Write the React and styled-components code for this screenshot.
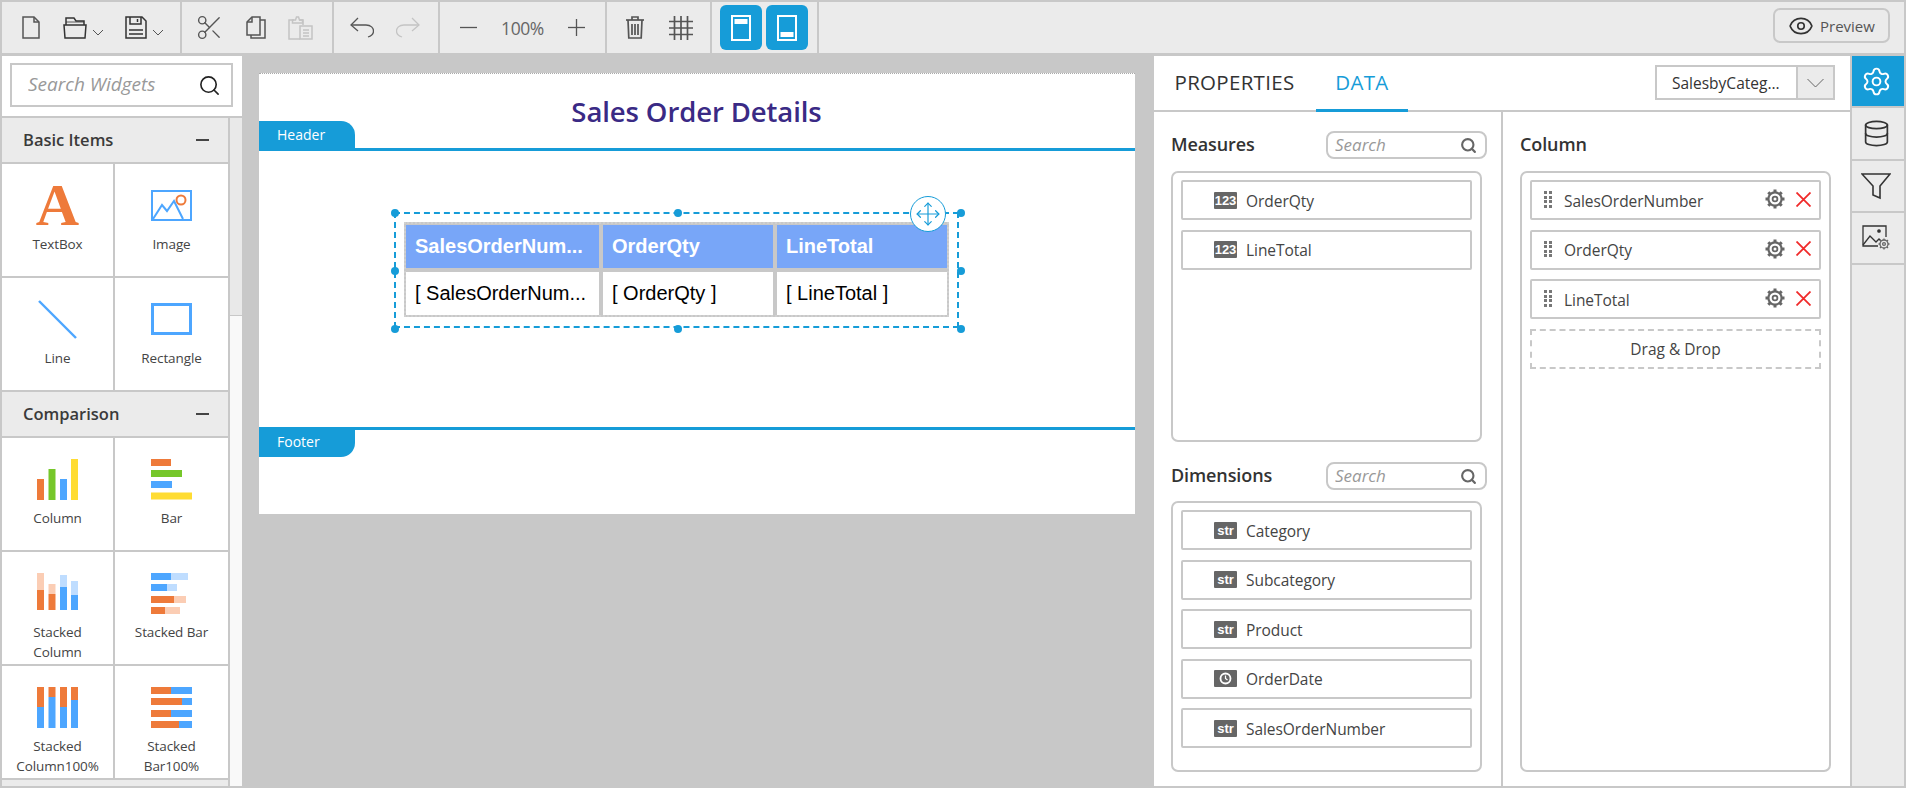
import React from 'react';
import styled, { createGlobalStyle } from 'styled-components';
import { Search, Settings, Database, Eye, Scissors, Move } from 'lucide-react';

const SANS = '"Open Sans", "Noto Sans", sans-serif';
const GRAY = '#c8c8c8';
const PANEL = '#ebebeb';
const BLUE = '#169cd8';
const TEXT = '#333';

const Global = createGlobalStyle`
  html, body { margin: 0; padding: 0; background: ${GRAY}; }
  * { box-sizing: border-box; }
  #root { width: 1906px; height: 788px; overflow: hidden; }
`;

const Root = styled.div`
  width: 1906px; height: 788px; padding: 2px; background: ${GRAY};
  display: flex; flex-direction: column; font-family: ${SANS}; color: ${TEXT};
`;
const Toolbar = styled.div`
  height: 51px; flex: none; display: flex; background: ${PANEL};
`;
const ToolGroup = styled.div`
  width: ${p => p.$w}px; flex: none; height: 100%;
  display: flex; align-items: center;
  padding-left: ${p => p.$pl}px; gap: ${p => p.$gap}px;
  border-right: 2px solid ${GRAY};
`;
const ToolEnd = styled.div`
  flex: 1; display: flex; align-items: flex-start; justify-content: flex-end;
  padding: 6px 14px 0 0;
`;
const Tool = styled.span`
  display: flex; align-items: center; flex: none;
  color: ${p => (p.$off ? '#c4c4c4' : '#555')};
`;
const ZoomText = styled.span`
  width: 91px; text-align: center; font-size: 17.5px; color: #666; letter-spacing: -0.4px;
`;
const ViewButton = styled.div`
  width: 42px; height: 45px; border-radius: 6px; background: ${BLUE};
  display: flex; align-items: center; justify-content: center;
`;
const PreviewButton = styled.div`
  width: 117px; height: 35px; border: 2px solid ${GRAY}; border-radius: 7px;
  display: flex; align-items: center; gap: 6px; padding-left: 13px;
  font-size: 15px; color: #555;
`;
const Body = styled.div`
  flex: 1; min-height: 0; margin-top: 3px; display: flex;
`;
const LeftPanel = styled.aside`
  width: 240px; flex: none; display: flex; flex-direction: column; background: #fff;
`;
const SearchArea = styled.div`
  flex: none; height: 62px; padding: 7px 9px 9px 8px; border-bottom: 2px solid ${GRAY};
`;
const WidgetSearch = styled.div`
  height: 44px; border: 2px solid ${GRAY}; display: flex; align-items: center; padding: 0 10px 0 16px;
`;
const PlainInput = styled.input`
  flex: 1; min-width: 0; border: 0; outline: 0; background: transparent; padding: 0 0 ${p => p.$lift}px;
  font-family: ${SANS}; font-style: italic; font-size: ${p => p.$size}px; color: #999;
  &::placeholder { color: #999; opacity: 1; }
`;
const ListRow = styled.div`
  flex: 1; min-height: 0; display: flex;
`;
const WidgetList = styled.div`
  width: 228px; flex: none; background: ${GRAY}; border-right: 2px solid ${GRAY};
  display: flex; flex-direction: column; overflow: hidden;
`;
const ScrollTrack = styled.div`
  flex: 1; background: #f9f9f9; display: flex; flex-direction: column;
`;
const ScrollThumb = styled.div`
  height: 198px; background: #e9e9e9; border-bottom: 1px solid ${GRAY};
`;
const CategoryHeader = styled.div`
  height: 44px; flex: none; background: ${PANEL}; display: flex; align-items: center; justify-content: space-between;
  padding: 0 19px 2px 21px; font-size: 16.5px; font-weight: 600; color: #3a3a3a;
`;
const CategoryMark = styled.span`
  width: 13px; height: 2px; background: #444; margin-top: 2px;
`;
const WidgetGrid = styled.div`
  display: grid; grid-template-columns: 111px 113px; grid-auto-rows: 112px; gap: 2px;
  padding: 2px 0; flex: none;
`;
const WidgetCell = styled.div`
  background: #fff; padding-top: 21px; display: flex; flex-direction: column; align-items: center;
`;
const WidgetIcon = styled.div`
  width: 41px; height: 41px; display: flex; align-items: center; justify-content: center;
`;
const LetterIcon = styled.span`
  font-family: "Liberation Serif", serif; font-weight: 700; font-size: 60px; line-height: 41px;
  color: #ee7a3a; height: 41px;
`;
const WidgetLabel = styled.div`
  margin-top: 8px; font-size: 13.5px; line-height: 20px; text-align: center; color: #444; letter-spacing: -0.1px;
`;
const Canvas = styled.main`
  width: 912px; flex: none; padding: 17px 0 0 17px;
`;
const ReportPage = styled.div`
  width: 876px; height: 441px; background: #fff; display: flex; flex-direction: column;
  border-top: 1px dotted #aaa;
`;
const HeaderBand = styled.div`
  height: 77px; flex: none; display: grid; border-bottom: 3px solid ${BLUE};
`;
const ReportTitle = styled.h1`
  grid-area: 1 / 1; justify-self: center; align-self: start; margin: 20px 1px 0 0;
  font-size: 27.5px; line-height: 36px; font-weight: 600; color: #3a2a85; letter-spacing: -0.1px;
`;
const BandTab = styled.div`
  grid-area: 1 / 1; align-self: end; justify-self: start;
  width: 96px; height: 27px; background: ${BLUE}; color: #fff; font-size: 14px;
  display: flex; align-items: center; padding: 0 0 ${p => (p.$bottom ? '5px' : '1px')} 18px;
  border-radius: ${p => (p.$bottom ? '0 0 14px 0' : '0 14px 0 0')};
`;
const BodyBand = styled.div`
  height: 276px; flex: none; padding: 61px 0 0 135px;
`;
const SelectionFrame = styled.div`
  position: relative; width: 565px; height: 116px; border: 2px dashed ${BLUE}; padding: 8px;
`;
const Handle = styled.span`
  position: absolute; left: ${p => p.$x}px; top: ${p => p.$y}px; width: 8px; height: 8px;
  margin: -4px 0 0 -4px; border-radius: 50%; background: ${BLUE};
`;
const MoveBadge = styled.div`
  position: absolute; left: 514px; top: -18px; width: 36px; height: 36px; border-radius: 50%; z-index: 2;
  background: #fff; border: 1.5px solid ${BLUE}; display: flex; align-items: center; justify-content: center; color: ${BLUE};
`;
const TableGrid = styled.div`
  width: 545px; height: 95px; border: 2px dotted #d0d0d0; background: ${GRAY}; padding-top: 1px;
  display: grid; grid-template-columns: 193px 170px 170px; grid-template-rows: 43px 43px; gap: 4px;
  font-family: "Liberation Sans", sans-serif; font-size: 20px;
`;
const HeadCell = styled.div`
  background: #78a6f8; color: #fff; font-weight: 700; display: flex; align-items: center; padding-left: 9px; overflow: hidden; white-space: nowrap;
`;
const DataCell = styled.div`
  background: #fff; color: #000; display: flex; align-items: center; padding-left: 9px; overflow: hidden; white-space: nowrap;
`;
const FooterBand = styled.div`
  flex: 1; border-top: 3px solid ${BLUE};
`;
const RightPanel = styled.section`
  width: 696px; flex: none; background: #fff; display: flex; flex-direction: column;
`;
const TabRow = styled.div`
  height: 56px; flex: none; border-bottom: 2px solid ${GRAY}; display: flex; align-items: stretch; padding: 0 15px 0 19px;
`;
const TabLabel = styled.div`
  display: flex; align-items: center; justify-content: center; font-size: 20.5px; font-weight: 500; height: 56px;
  width: ${p => p.$w}px; margin-left: ${p => p.$ml}px; color: ${p => (p.$active ? BLUE : TEXT)}; letter-spacing: 0.3px; padding-bottom: 2px;
  border-bottom: 3px solid ${p => (p.$active ? BLUE : 'transparent')};
`;
const DatasetSelect = styled.div`
  margin: 9px 0 0 auto; width: 180px; height: 35px; border: 2px solid ${GRAY}; display: flex; align-items: stretch; font-size: 15.5px;
`;
const DatasetName = styled.div`
  flex: 1; display: flex; align-items: center; padding-left: 15px; white-space: nowrap;
`;
const DatasetArrow = styled.div`
  width: 37px; flex: none; background: ${PANEL}; border-left: 2px solid ${GRAY}; display: flex; align-items: center; justify-content: center; color: #666;
`;
const DataColumns = styled.div`
  flex: 1; min-height: 0; display: grid; grid-template-columns: 349px 347px;
`;
const DataColumn = styled.div`
  padding: 19px 0 0 17px; display: flex; flex-direction: column;
  border-right: ${p => (p.$divided ? `2px solid ${GRAY}` : '0')};
`;
const SectionHead = styled.div`
  width: 316px; height: 28px; flex: none; display: flex; align-items: center; justify-content: space-between;
  font-size: 18px; font-weight: 600; color: #333; letter-spacing: -0.1px;
`;
const SectionTitle = styled.span`
  margin-top: -2px;
`;
const MiniSearch = styled.div`
  width: 161px; height: 28px; border: 2px solid ${GRAY}; border-radius: 8px; display: flex; align-items: center; padding: 0 8px 0 7px; color: #666;
`;
const FieldBox = styled.div`
  width: 311px; height: ${p => p.$h}px; margin-top: ${p => p.$mt}px; flex: none; border: 2px solid ${GRAY}; border-radius: 7px;
  padding: 7px 8px; display: flex; flex-direction: column; gap: 9.5px;
`;
const SpacedBlock = styled.div`
  margin-top: 20px; display: flex; flex-direction: column;
`;
const FieldItem = styled.div`
  width: 291px; height: 40px; flex: none; border: 2px solid ${GRAY}; border-radius: 2px; display: flex; align-items: center;
  padding-left: ${p => p.$pl}px; font-size: 15.5px; color: #444; letter-spacing: -0.05px;
`;
const FieldText = styled.span`
  flex: 1; padding-top: 1px;
`;
const TypeBadge = styled.span`
  width: 23px; height: 17px; flex: none; margin-right: 9px; background: #666; color: #fff; border-radius: 1px;
  display: flex; align-items: center; justify-content: center; font-family: "Liberation Sans", sans-serif; font-weight: 700; font-size: 13px;
`;
const GripIcon = styled.span`
  width: 8px; flex: none; margin-right: 12px; display: grid; grid-template-columns: 3px 3px; gap: 1.5px 2px; margin-top: -1px;
`;
const GripDot = styled.i`
  width: 3px; height: 3px; background: #777; display: block;
`;
const FieldActions = styled.span`
  display: flex; align-items: center; gap: 11px; padding-right: 8px; flex: none; margin-top: -2px;
`;
const DropZone = styled.div`
  width: 291px; height: 40px; flex: none; border: 2px dashed ${GRAY}; display: flex; align-items: center; justify-content: center; font-size: 15.5px; color: #444;
`;
const Rail = styled.nav`
  width: 54px; flex: none; background: ${PANEL}; border-left: 2px solid ${GRAY}; display: flex; flex-direction: column;
`;
const RailCell = styled.div`
  height: ${p => p.$h}px; flex: none; display: flex; align-items: center; justify-content: center; padding-right: 4px;
  background: ${p => (p.$active ? BLUE : PANEL)}; color: ${p => (p.$active ? '#fff' : '#333')}; border-bottom: 2px solid ${GRAY};
`;

const Svg = ({ w, h, sw = 1.4, children }) => (
  <svg width={w} height={h} viewBox={`0 0 ${w} ${h}`} fill="none" stroke="currentColor" strokeWidth={sw}>{children}</svg>
);

const NewFileIcon = () => <Svg w={18} h={23} sw={1.5}><path d="M1 1H12L17 6V22H1Z" /><path d="M12 1V6H17" /></Svg>;
const OpenIcon = () => (
  <Tool>
    <svg width={40} height={23} viewBox="0 0 40 23" fill="none" stroke="#333" strokeWidth="1.5">
      <path d="M3 9V2H11L13 5H21V9" /><path d="M1 9H23L22 22H2Z" /><path d="M3 6H21" strokeWidth="0.8" />
      <path d="M30 14L35 19L40 14" stroke="#555" strokeWidth="1" />
    </svg>
  </Tool>
);
const SaveIcon = () => (
  <Tool>
    <svg width={40} height={23} viewBox="0 0 40 23" fill="none" stroke="#333" strokeWidth="1.5">
      <path d="M1 1H17L21 5V22H1Z" /><path d="M5 1V8H16V1" /><path d="M12.5 3V6" />
      <path d="M4 14H18M4 18H18" />
      <path d="M28 14L33 19L38 14" stroke="#555" strokeWidth="1" />
    </svg>
  </Tool>
);
const CopyIcon = () => (
  <Svg w={20} h={23} sw={1.5}>
    <path d="M1 6L6 1H14V19H1Z" /><path d="M6 1V6H1" /><path d="M14 4H19V22H5V19" />
  </Svg>
);
const PasteIcon = () => (
  <Svg w={25} h={24} sw={1.5}>
    <path d="M6 4H1V23H12" /><path d="M15 9V4H11" /><path d="M5 7V4H8L9 1H11L12 4H15V7Z" transform="translate(-0.5 0)" />
    <path d="M12 10H24V23H12Z" /><path d="M15 14H21M15 17H21M15 20H21" />
  </Svg>
);
const UndoIcon = ({ flip }) => (
  <svg width={24} height={21} viewBox="0 0 24 21" fill="none" stroke="currentColor" strokeWidth="1.3"
    style={flip ? { transform: 'scaleX(-1)' } : undefined}>
    <path d="M8 1L1 8L8 14" /><path d="M1 8H16C21 8 23.5 11 23.5 14C23.5 17 21 19 18 20" />
  </svg>
);
const DashIcon = ({ plus }) => (
  <Svg w={17} h={17} sw={1.3}><path d="M0 8.5H17" />{plus && <path d="M8.5 0V17" />}</Svg>
);
const TrashIcon = () => (
  <Svg w={18} h={23} sw={1.7}>
    <path d="M0 4H18" /><path d="M6 4V1H12V4" /><path d="M2 4L2.8 22H15.2L16 4" />
    <path d="M6 8V19M9 8V19M12 8V19" />
  </Svg>
);
const GridIcon = () => (
  <Svg w={24} h={24} sw={1.7}>
    <path d="M0 5.5H24M0 12H24M0 18.5H24" /><path d="M5.5 0V24M12 0V24M18.5 0V24" />
  </Svg>
);
const LayoutIcon = ({ bottom }) => (
  <svg width={20} height={26} viewBox="0 0 20 26">
    <rect x="1" y="1" width="18" height="24" fill="none" stroke="#fff" strokeWidth="2" />
    <rect x="3.5" y={bottom ? 17 : 4} width="13" height="5" fill="#fff" />
  </svg>
);
const ImageGearIcon = () => (
  <svg width={28} height={26} viewBox="0 0 28 26" fill="none" stroke="#333" strokeWidth="1.3">
    <path d="M16 21H1V1H24V12" />
    <path d="M1 20L8 11L14 17L17 14L19 16" />
    <circle cx="17" cy="6" r="1.2" fill="#333" />
    <g stroke="#666"><circle cx="22" cy="19" r="4" /><circle cx="22" cy="19" r="1.4" /><path d="M22 13.5V15M22 23V24.5M16.5 19H18M26 19H27.5M18 15L19.2 16.2M24.8 21.8L26 23M26 15L24.8 16.2M19.2 21.8L18 23" /></g>
  </svg>
);
const FunnelIcon = () => (
  <svg width={30} height={27} viewBox="0 0 30 27" fill="none" stroke="#333" strokeWidth="1.6">
    <path d="M1 1H29L19 13V25L12 22V13Z" />
  </svg>
);
const ClockBadge = () => (
  <svg width={13} height={13} viewBox="0 0 13 13" fill="none" stroke="#fff" strokeWidth="1.8">
    <circle cx="6.5" cy="6.5" r="5" /><path d="M6.5 3.5V6.5L8.5 8" strokeWidth="1.2" />
  </svg>
);
const FieldGear = () => (
  <svg width={20} height={20} viewBox="0 0 20 20" fill="none" stroke="#666">
    <circle cx="10" cy="10" r="6.6" strokeWidth="2.2" />
    <circle cx="10" cy="10" r="2.4" strokeWidth="1.8" />
    <path strokeWidth="3" d="M10 0.5V3.5M10 16.5V19.5M0.5 10H3.5M16.5 10H19.5M3.3 3.3L5.4 5.4M14.6 14.6L16.7 16.7M16.7 3.3L14.6 5.4M5.4 14.6L3.3 16.7" />
  </svg>
);
const FieldRemove = () => (
  <svg width={15} height={15} viewBox="0 0 15 15" fill="none" stroke="#f02a2a" strokeWidth="1.8">
    <path d="M0.5 0.5L14.5 14.5M14.5 0.5L0.5 14.5" />
  </svg>
);
const SelectChevron = () => (
  <svg width={17} height={10} viewBox="0 0 17 10" fill="none" stroke="#666" strokeWidth="1">
    <path d="M0.5 1L8.5 9L16.5 1" />
  </svg>
);

const O = '#ee7a3a', LO = '#fbcdb4', B = '#4da6ff', LB = '#bfddff', G = '#76c72a', Y = '#ffdc32';
const ChartIcon = ({ rects }) => (
  <svg width={41} height={41} viewBox="0 0 41 41">
    {rects.map(([x, y, w, h, c], i) => <rect key={i} x={x} y={y} width={w} height={h} fill={c} />)}
  </svg>
);
const ImageWidgetIcon = () => (
  <svg width={41} height={31} viewBox="0 0 41 31" fill="none" strokeWidth="2">
    <rect x="1" y="1" width="39" height="29" stroke={B} />
    <path d="M2 29L11 15L16 21L23 11L32 29" stroke={B} />
    <circle cx="30" cy="10" r="4.5" stroke={O} />
  </svg>
);
const LineWidgetIcon = () => (
  <svg width={41} height={41} viewBox="0 0 41 41"><path d="M2 2L39 39" stroke={B} strokeWidth="2.4" /></svg>
);
const RectWidgetIcon = () => (
  <svg width={41} height={33} viewBox="0 0 41 33"><rect x="1.5" y="1.5" width="38" height="29" fill="none" stroke={B} strokeWidth="3" /></svg>
);

const hbars = (rows) => rows.flatMap(([y, parts]) => {
  let x = 0;
  return parts.map(([w, c]) => { const r = [x, y, w, 7, c]; x += w; return r; });
});
const vbars = (cols) => cols.flatMap(([x, parts]) => parts.map(([y, h, c]) => [x, y, 7, h, c]));

const basicWidgets = [
  { label: 'TextBox', icon: <LetterIcon>A</LetterIcon> },
  { label: 'Image', icon: <ImageWidgetIcon /> },
  { label: 'Line', icon: <LineWidgetIcon /> },
  { label: 'Rectangle', icon: <RectWidgetIcon /> },
];
const comparisonWidgets = [
  { label: 'Column', icon: <ChartIcon rects={vbars([[0, [[20, 21, O]]], [11.5, [[10, 31, G]]], [23, [[20, 21, B]]], [34, [[0, 41, Y]]]])} /> },
  { label: 'Bar', icon: <ChartIcon rects={hbars([[0, [[20, O]]], [11, [[31, G]]], [22, [[21, B]]], [33.5, [[41, Y]]]])} /> },
  { label: <>Stacked<br />Column</>, icon: <ChartIcon rects={vbars([[0, [[0, 17, LO], [17, 20, O]]], [11.5, [[11, 10, LO], [21, 16, O]]], [23, [[2, 12, LB], [14, 23, B]]], [34, [[8, 14, LB], [22, 15, B]]]])} /> },
  { label: 'Stacked Bar', icon: <ChartIcon rects={hbars([[0, [[20, B], [17, LB]]], [11, [[16, B], [10, LB]]], [23, [[23, O], [12, LO]]], [34, [[14, O], [15, LO]]]])} /> },
  { label: <>Stacked<br />Column100%</>, icon: <ChartIcon rects={vbars([[0, [[0, 20, O], [20, 21, B]]], [11.5, [[0, 10, O], [10, 31, B]]], [23, [[0, 20, O], [20, 21, B]]], [34, [[0, 13, O], [13, 28, B]]]])} /> },
  { label: <>Stacked<br />Bar100%</>, icon: <ChartIcon rects={hbars([[0, [[20, O], [21, B]]], [11, [[31, O], [10, B]]], [23, [[20, O], [21, B]]], [34, [[28, O], [13, B]]]])} /> },
];

const handles = [[-1, -1], [282, -1], [565, -1], [-1, 57], [565, 57], [-1, 115], [282, 115], [565, 115]];

const Grip = () => (
  <GripIcon>{[0, 1, 2, 3, 4, 5, 6, 7].map(i => <GripDot key={i} />)}</GripIcon>
);

const Widgets = ({ items }) => (
  <WidgetGrid>
    {items.map((w, i) => (
      <WidgetCell key={i}>
        <WidgetIcon>{w.icon}</WidgetIcon>
        <WidgetLabel>{w.label}</WidgetLabel>
      </WidgetCell>
    ))}
  </WidgetGrid>
);

const MiniSearchBox = () => (
  <MiniSearch>
    <PlainInput $size={17} $lift={2} placeholder="Search" readOnly />
    <Search size={17} strokeWidth={3} />
  </MiniSearch>
);
const MeasureField = ({ name }) => (
  <FieldItem $pl={31}><TypeBadge>123</TypeBadge><FieldText>{name}</FieldText></FieldItem>
);
const DimensionField = ({ name, clock }) => (
  <FieldItem $pl={31}><TypeBadge>{clock ? <ClockBadge /> : 'str'}</TypeBadge><FieldText>{name}</FieldText></FieldItem>
);
const ColumnField = ({ name }) => (
  <FieldItem $pl={12}>
    <Grip />
    <FieldText>{name}</FieldText>
    <FieldActions><FieldGear /><FieldRemove /></FieldActions>
  </FieldItem>
);

export default function App() {
  return (
    <Root>
      <Global />
      <Toolbar>
        <ToolGroup $w={180} $pl={20} $gap={22.5}>
          <Tool><NewFileIcon /></Tool>
          <OpenIcon />
          <SaveIcon />
        </ToolGroup>
        <ToolGroup $w={152} $pl={13} $gap={22}>
          <Tool><Scissors size={29} strokeWidth={1.15} /></Tool>
          <Tool><CopyIcon /></Tool>
          <Tool $off><PasteIcon /></Tool>
        </ToolGroup>
        <ToolGroup $w={106} $pl={16} $gap={22}>
          <Tool><UndoIcon /></Tool>
          <Tool $off><UndoIcon flip /></Tool>
        </ToolGroup>
        <ToolGroup $w={167} $pl={20} $gap={0}>
          <Tool><DashIcon /></Tool>
          <ZoomText>100%</ZoomText>
          <Tool><DashIcon plus /></Tool>
        </ToolGroup>
        <ToolGroup $w={105} $pl={19} $gap={25}>
          <Tool><TrashIcon /></Tool>
          <Tool><GridIcon /></Tool>
        </ToolGroup>
        <ToolGroup $w={107} $pl={8} $gap={4}>
          <ViewButton><LayoutIcon /></ViewButton>
          <ViewButton><LayoutIcon bottom /></ViewButton>
        </ToolGroup>
        <ToolEnd>
          <PreviewButton><Eye size={26} strokeWidth={1.5} color="#333" />Preview</PreviewButton>
        </ToolEnd>
      </Toolbar>
      <Body>
        <LeftPanel>
          <SearchArea>
            <WidgetSearch>
              <PlainInput $size={19} $lift={3} placeholder="Search Widgets" readOnly />
              <Search size={23} strokeWidth={1.7} color="#222" />
            </WidgetSearch>
          </SearchArea>
          <ListRow>
            <WidgetList>
              <CategoryHeader>Basic Items<CategoryMark /></CategoryHeader>
              <Widgets items={basicWidgets} />
              <CategoryHeader>Comparison<CategoryMark /></CategoryHeader>
              <Widgets items={comparisonWidgets} />
              <CategoryHeader />
            </WidgetList>
            <ScrollTrack><ScrollThumb /></ScrollTrack>
          </ListRow>
        </LeftPanel>
        <Canvas>
          <ReportPage>
            <HeaderBand>
              <ReportTitle>Sales Order Details</ReportTitle>
              <BandTab>Header</BandTab>
            </HeaderBand>
            <BodyBand>
              <SelectionFrame>
                {handles.map(([x, y], i) => <Handle key={i} $x={x} $y={y} />)}
                <MoveBadge><Move size={26} strokeWidth={1.1} /></MoveBadge>
                <TableGrid>
                  <HeadCell>SalesOrderNum...</HeadCell>
                  <HeadCell>OrderQty</HeadCell>
                  <HeadCell>LineTotal</HeadCell>
                  <DataCell>[ SalesOrderNum...</DataCell>
                  <DataCell>[ OrderQty ]</DataCell>
                  <DataCell>[ LineTotal ]</DataCell>
                </TableGrid>
              </SelectionFrame>
            </BodyBand>
            <FooterBand><BandTab $bottom>Footer</BandTab></FooterBand>
          </ReportPage>
        </Canvas>
        <RightPanel>
          <TabRow>
            <TabLabel $w={123} $ml={0}>PROPERTIES</TabLabel>
            <TabLabel $w={92} $ml={20} $active>DATA</TabLabel>
            <DatasetSelect>
              <DatasetName>SalesbyCateg...</DatasetName>
              <DatasetArrow><SelectChevron /></DatasetArrow>
            </DatasetSelect>
          </TabRow>
          <DataColumns>
            <DataColumn $divided>
              <SectionHead>
                <SectionTitle>Measures</SectionTitle>
                <MiniSearchBox />
              </SectionHead>
              <FieldBox $h={271} $mt={12}>
                <MeasureField name="OrderQty" />
                <MeasureField name="LineTotal" />
              </FieldBox>
              <SpacedBlock>
                <SectionHead>
                  <SectionTitle>Dimensions</SectionTitle>
                  <MiniSearchBox />
                </SectionHead>
                <FieldBox $h={271} $mt={11}>
                  <DimensionField name="Category" />
                  <DimensionField name="Subcategory" />
                  <DimensionField name="Product" />
                  <DimensionField name="OrderDate" clock />
                  <DimensionField name="SalesOrderNumber" />
                </FieldBox>
              </SpacedBlock>
            </DataColumn>
            <DataColumn>
              <SectionHead><SectionTitle>Column</SectionTitle></SectionHead>
              <FieldBox $h={601} $mt={12}>
                <ColumnField name="SalesOrderNumber" />
                <ColumnField name="OrderQty" />
                <ColumnField name="LineTotal" />
                <DropZone>Drag &amp; Drop</DropZone>
              </FieldBox>
            </DataColumn>
          </DataColumns>
        </RightPanel>
        <Rail>
          <RailCell $h={52} $active><Settings size={31} strokeWidth={1.5} /></RailCell>
          <RailCell $h={53}><Database size={29} strokeWidth={1.4} /></RailCell>
          <RailCell $h={52}><FunnelIcon /></RailCell>
          <RailCell $h={52}><ImageGearIcon /></RailCell>
        </Rail>
      </Body>
    </Root>
  );
}
